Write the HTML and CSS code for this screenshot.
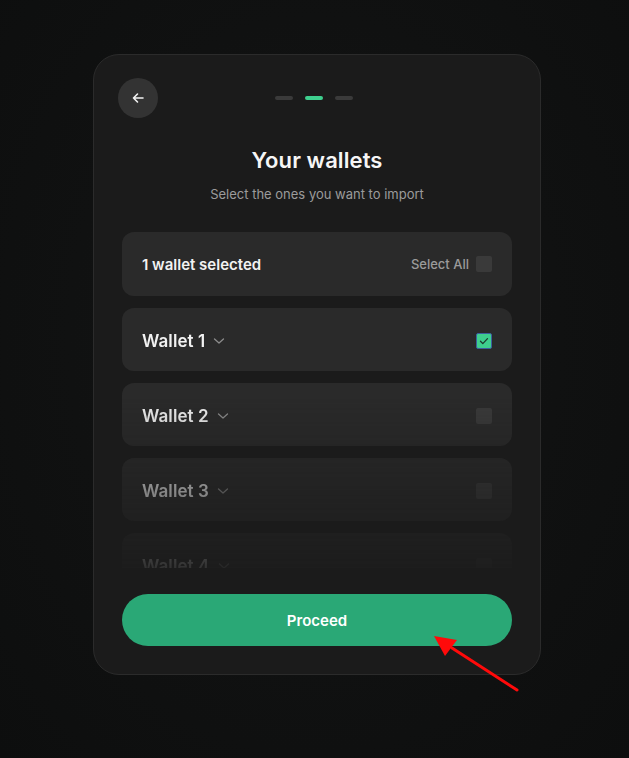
FILE: index.html
```html
<!DOCTYPE html>
<html lang="en">
<head>
  <meta charset="UTF-8">
  <meta name="viewport" content="width=device-width, initial-scale=1.0">
  <title>Your wallets</title>
  <link rel="stylesheet" href="styles.css">
</head>
<body>
  <div class="card">
    <div class="top-bar">
      <button class="back-btn" aria-label="Back">
        <svg width="16" height="16" viewBox="0 0 16 16" fill="none" stroke="#f2f2f2" stroke-width="1.6" stroke-linecap="round" stroke-linejoin="round">
          <path d="M13 8H3.5M7.5 4L3.5 8l4 4"/>
        </svg>
      </button>
      <div class="steps">
        <span class="step"></span>
        <span class="step active"></span>
        <span class="step"></span>
      </div>
    </div>

    <h1 class="title">Your wallets</h1>
    <p class="subtitle">Select the ones you want to import</p>

    <div class="summary-row">
      <span class="summary-text">1 wallet selected</span>
      <label class="select-all">
        Select All
        <span class="box"></span>
      </label>
    </div>

    <div class="wallet-list">
      <div class="wallet-row">
        <span class="wallet-name">Wallet 1
          <svg class="chevron" width="12" height="8" viewBox="0 0 12 8" fill="none" stroke="#8c8c8c" stroke-width="1.3" stroke-linecap="round" stroke-linejoin="round"><path d="M1.5 2l4.5 4 4.5-4"/></svg>
        </span>
        <span class="box checked">
          <svg width="12" height="12" viewBox="0 0 12 12" fill="none" stroke="#1d3b2f" stroke-width="1.3" stroke-linecap="round" stroke-linejoin="round"><path d="M2.5 6.3l2.3 2.3 4.7-5"/></svg>
        </span>
      </div>
      <div class="wallet-row">
        <span class="wallet-name">Wallet 2
          <svg class="chevron" width="12" height="8" viewBox="0 0 12 8" fill="none" stroke="#8c8c8c" stroke-width="1.3" stroke-linecap="round" stroke-linejoin="round"><path d="M1.5 2l4.5 4 4.5-4"/></svg>
        </span>
        <span class="box"></span>
      </div>
      <div class="wallet-row">
        <span class="wallet-name">Wallet 3
          <svg class="chevron" width="12" height="8" viewBox="0 0 12 8" fill="none" stroke="#8c8c8c" stroke-width="1.3" stroke-linecap="round" stroke-linejoin="round"><path d="M1.5 2l4.5 4 4.5-4"/></svg>
        </span>
        <span class="box"></span>
      </div>
      <div class="wallet-row">
        <span class="wallet-name">Wallet 4
          <svg class="chevron" width="12" height="8" viewBox="0 0 12 8" fill="none" stroke="#8c8c8c" stroke-width="1.3" stroke-linecap="round" stroke-linejoin="round"><path d="M1.5 2l4.5 4 4.5-4"/></svg>
        </span>
        <span class="box"></span>
      </div>
    </div>

    <button class="proceed">Proceed</button>
  </div>

  <!-- annotation arrow -->
  <svg class="pointer" width="629" height="758" viewBox="0 0 629 758">
    <line x1="517" y1="690" x2="452" y2="648" stroke="#ff0a0a" stroke-width="3" stroke-linecap="round"/>
    <polygon points="434,636 457,640 445,656" fill="#ff0a0a"/>
  </svg>
</body>
</html>
```

FILE: styles.css
```css
* {
    margin: 0;
    padding: 0;
    box-sizing: border-box;
}

:root {
    --page-background: #0e0f0f;
    --card-background: #1b1b1b;
    --card-border: #2b2b2b;
    --row-background: #2a2a2a;
    --box-background: #3a3a3a;
    --muted-text: #9b9b9b;
    --green: #2aa876;
    --green-light: #3ecf8e;
}

body {
    font-family: Inter, "Noto Sans", Arial, sans-serif;
    min-height: 758px;
    background: radial-gradient(ellipse at 50% 45%, #141515 0%, #101111 55%, #0d0e0e 100%);
    background-color: var(--page-background);
    color: #f4f4f4;
    display: flex;
    justify-content: center;
    align-items: flex-start;
    padding: 54px 0 0 5px;
}

.card {
    width: 448px;
    height: 621px;
    background: var(--card-background);
    border: 1px solid var(--card-border);
    border-radius: 26px;
    padding: 23px 28px 27px;
    display: flex;
    flex-direction: column;
}

.top-bar {
    display: flex;
    align-items: center;
    height: 40px;
    margin-left: -4px;
    position: relative;
}

.back-btn {
    width: 40px;
    height: 40px;
    border-radius: 50%;
    border: none;
    background: #333333;
    display: flex;
    align-items: center;
    justify-content: center;
}

.steps {
    position: absolute;
    left: 50%;
    top: 50%;
    transform: translate(-50%, -50%);
    margin-left: -1px;
    display: flex;
    gap: 12px;
}

.step {
    width: 18px;
    height: 4px;
    border-radius: 2px;
    background: #3a3a3a;
}

.step.active {
    background: var(--green-light);
}

.title {
    margin-top: 29px;
    text-align: center;
    font-size: 22px;
    font-weight: 600;
    letter-spacing: 0.1px;
    line-height: 27px;
    color: #f6f6f6;
}

.subtitle {
    margin-top: 11px;
    text-align: center;
    font-size: 13px;
    line-height: 18px;
    color: var(--muted-text);
}

.summary-row {
    margin-top: 29px;
    height: 64px;
    background: var(--row-background);
    border-radius: 12px;
    padding: 0 20px;
    display: flex;
    align-items: center;
    justify-content: space-between;
    flex-shrink: 0;
}

.summary-text {
    font-size: 15px;
    font-weight: 600;
    color: #f2f2f2;
}

.select-all {
    display: flex;
    align-items: center;
    gap: 7px;
    font-size: 13px;
    font-weight: 500;
    color: var(--muted-text);
}

.box {
    width: 16px;
    height: 16px;
    border-radius: 2px;
    background: var(--box-background);
    display: flex;
    align-items: center;
    justify-content: center;
}

.box.checked {
    background: var(--green-light);
    border: 1px solid #3c5f9e;
}

.wallet-list {
    margin-top: 12px;
    height: 260px;
    overflow: hidden;
    display: flex;
    flex-direction: column;
    gap: 12px;
    -webkit-mask-image: linear-gradient(to bottom, #000 34%, transparent 108%);
    mask-image: linear-gradient(to bottom, #000 34%, transparent 108%);
    flex-shrink: 0;
}

.wallet-row {
    height: 63px;
    flex-shrink: 0;
    background: var(--row-background);
    border-radius: 12px;
    padding: 2px 20px 0;
    display: flex;
    align-items: center;
    justify-content: space-between;
}

.wallet-name {
    display: flex;
    align-items: center;
    gap: 8px;
    font-size: 17px;
    font-weight: 600;
    letter-spacing: 0.1px;
    color: #f2f2f2;
}

.chevron {
    margin-top: 1px;
}

.proceed {
    margin-top: 26px;
    height: 52px;
    border: none;
    border-radius: 26px;
    background: var(--green);
    color: #ffffff;
    font-family: inherit;
    font-size: 15px;
    font-weight: 600;
}

.pointer {
    position: absolute;
    left: 0;
    top: 0;
    pointer-events: none;
}
```
